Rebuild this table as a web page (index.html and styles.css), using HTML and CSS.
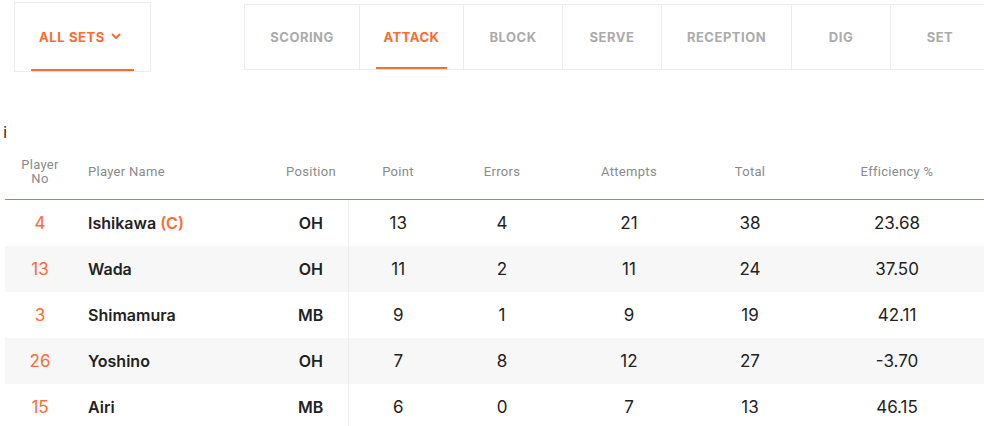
FILE: index.html
```html
<!DOCTYPE html>
<html>
<head>
<meta charset="utf-8">
<link rel="stylesheet" href="styles.css">
</head>
<body>
<div class="topbar">
  <div class="sets">
    <span class="sets-label">ALL SETS</span>
    <svg class="chev" width="10" height="6" viewBox="0 0 10 6"><path d="M1 1 L5 5 L9 1" fill="none" stroke="#ff6a33" stroke-width="2"/></svg>
    <span class="sets-line"></span>
  </div>
  <div class="tabs">
    <div class="tab tab-scoring">SCORING</div>
    <div class="tab tab-active">ATTACK</div>
    <div class="tab">BLOCK</div>
    <div class="tab">SERVE</div>
    <div class="tab tab-reception">RECEPTION</div>
    <div class="tab">DIG</div>
    <div class="tab">SET</div>
  </div>
</div>
<div class="stray">i</div>
<table class="stats">
  <colgroup>
    <col class="c-no"><col class="c-name"><col class="c-pos"><col class="c-pt"><col class="c-err"><col class="c-att"><col class="c-tot"><col class="c-eff">
  </colgroup>
  <thead>
    <tr>
      <th>Player<br>No</th>
      <th class="left">Player Name</th>
      <th>Position</th>
      <th>Point</th>
      <th>Errors</th>
      <th>Attempts</th>
      <th>Total</th>
      <th>Efficiency %</th>
    </tr>
  </thead>
  <tbody>
    <tr>
      <td class="no">4</td><td class="name">Ishikawa <span class="cap">(C)</span></td><td class="pos">OH</td>
      <td>13</td><td>4</td><td>21</td><td>38</td><td>23.68</td>
    </tr>
    <tr class="alt">
      <td class="no">13</td><td class="name">Wada</td><td class="pos">OH</td>
      <td>11</td><td>2</td><td>11</td><td>24</td><td>37.50</td>
    </tr>
    <tr>
      <td class="no">3</td><td class="name">Shimamura</td><td class="pos">MB</td>
      <td>9</td><td>1</td><td>9</td><td>19</td><td>42.11</td>
    </tr>
    <tr class="alt">
      <td class="no">26</td><td class="name">Yoshino</td><td class="pos">OH</td>
      <td>7</td><td>8</td><td>12</td><td>27</td><td>-3.70</td>
    </tr>
    <tr>
      <td class="no">15</td><td class="name">Airi</td><td class="pos">MB</td>
      <td>6</td><td>0</td><td>7</td><td>13</td><td>46.15</td>
    </tr>
  </tbody>
</table>
</body>
</html>
```
FILE: styles.css
```css
html, body {
  margin: 0;
  padding: 0;
  background: #fff;
  overflow: hidden;
}
body {
  width: 984px;
  height: 426px;
  font-family: "Inter", "Open Sans", sans-serif;
  color: #222;
}
.topbar {
  display: flex;
  align-items: flex-start;
  height: 72px;
}
.sets {
  position: relative;
  box-sizing: border-box;
  flex-shrink: 0;
  margin-left: 14px;
  margin-top: 2px;
  width: 137px;
  height: 70px;
  border: 1px solid #ececec;
  display: flex;
  align-items: center;
  padding-left: 24px;
  padding-bottom: 1px;
  gap: 6px;
}
.sets-label {
  font-size: 13px;
  font-weight: 700;
  letter-spacing: 0.6px;
  color: #ff6a33;
}
.chev {
  margin-top: -2px;
}
.sets-line {
  position: absolute;
  left: 16px;
  right: 16px;
  bottom: 0;
  height: 2px;
  background: #ff6a33;
}
.tabs {
  display: flex;
  margin-left: 93px;
  margin-top: 4px;
  height: 66px;
  box-sizing: border-box;
  border-top: 1px solid #ececec;
  border-bottom: 1px solid #ececec;
  border-left: 1px solid #ececec;
  flex-shrink: 0;
}
.tab {
  position: relative;
  box-sizing: border-box;
  flex-shrink: 0;
  min-width: 99px;
  padding: 0 24px 1px;
  display: flex;
  align-items: center;
  justify-content: center;
  border-right: 1px solid #ececec;
  font-size: 13px;
  font-weight: 700;
  letter-spacing: 0.5px;
  color: #ababab;
}
.tab-scoring { width: 115px; }
.tab-active { width: 104px; color: #ff6a33; }
.tab-reception { width: 130px; }
.tab-active::after {
  content: "";
  position: absolute;
  left: 16px;
  right: 16px;
  bottom: 0;
  height: 2px;
  background: #ff6a33;
}
.stray {
  margin-top: 52px;
  height: 22px;
  padding-left: 3px;
  font-family: "DejaVu Sans", sans-serif;
  font-size: 15px;
  line-height: 18px;
  color: #222;
}
.stats {
  margin-left: 5px;
  border-collapse: collapse;
  table-layout: fixed;
  width: 991px;
}
.c-no { width: 70px; }
.c-name { width: 199px; }
.c-pos { width: 74px; }
.c-pt { width: 100px; }
.c-err { width: 108px; }
.c-att { width: 146px; }
.c-tot { width: 96px; }
.c-eff { width: 198px; }
.stats th {
  height: 51px;
  padding: 0 0 2px 0;
  font-family: "Roboto", sans-serif;
  font-weight: 400;
  font-size: 13px;
  line-height: 14px;
  letter-spacing: 0.3px;
  color: #8a8a8a;
  text-align: center;
  vertical-align: middle;
  border-bottom: 1px solid #f06a3c;
}
.stats th.left {
  text-align: left;
  padding-left: 13px;
}
.stats td {
  height: 46px;
  padding: 0;
  text-align: center;
  vertical-align: middle;
  font-size: 17px;
  color: #222;
}
.stats tr.alt td {
  background: #f7f7f7;
}
.stats td.no {
  color: #ff6a33;
}
.stats td.name {
  text-align: left;
  padding-left: 13px;
  font-weight: 600;
  font-size: 16px;
}
.stats td.name .cap {
  color: #ff6a33;
}
.stats td.pos {
  font-weight: 600;
  font-size: 16px;
  border-right: 1px solid #ececec;
}
```
